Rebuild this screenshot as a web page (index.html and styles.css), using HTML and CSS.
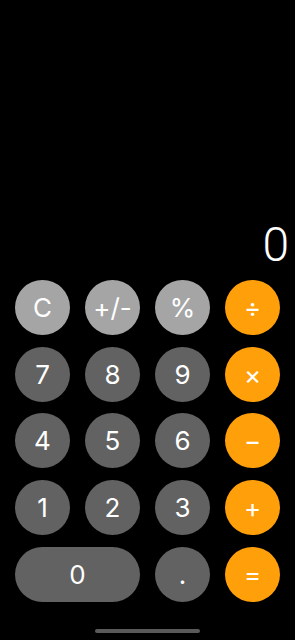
FILE: index.html
```html
<!DOCTYPE html>
<html lang="en">
<head>
<meta charset="utf-8">
<title>Calculator</title>
<link rel="stylesheet" href="styles.css">
</head>
<body>
<main class="calc">
  <div class="display"><span class="value">0</span></div>
  <div class="keypad">
    <button class="key fn">C</button>
    <button class="key fn">+/-</button>
    <button class="key fn">%</button>
    <button class="key op">÷</button>
    <button class="key num">7</button>
    <button class="key num">8</button>
    <button class="key num">9</button>
    <button class="key op">×</button>
    <button class="key num">4</button>
    <button class="key num">5</button>
    <button class="key num">6</button>
    <button class="key op">−</button>
    <button class="key num">1</button>
    <button class="key num">2</button>
    <button class="key num">3</button>
    <button class="key op">+</button>
    <button class="key num zero">0</button>
    <button class="key num">.</button>
    <button class="key op">=</button>
  </div>
  <div class="footer"><span class="home-indicator"></span></div>
</main>
</body>
</html>
```
FILE: styles.css
```css
html, body {
  margin: 0;
  padding: 0;
  background: #000;
}
.calc {
  width: 295px;
  height: 640px;
  display: flex;
  flex-direction: column;
  font-family: Inter, "Liberation Sans", sans-serif;
  color: #fff;
}
.display {
  flex: 1;
  display: flex;
  justify-content: flex-end;
  align-items: flex-end;
  padding: 0 6px 11px 0;
}
.value {
  font-family: Roboto, Inter, sans-serif;
  font-size: 48px;
  font-weight: 300;
  line-height: 1;
}
.keypad {
  display: grid;
  grid-template-columns: repeat(4, 55px);
  grid-auto-rows: 55px;
  column-gap: 15px;
  row-gap: 11.67px;
  padding: 0 15px;
}
.key {
  border: none;
  margin: 0;
  padding: 0;
  border-radius: 27.5px;
  color: #fff;
  font-family: Inter, "Liberation Sans", sans-serif;
  font-size: 26px;
  font-weight: 400;
  display: flex;
  align-items: center;
  justify-content: center;
}
.fn { background: #a5a5a5; }
.num { background: #626262; }
.op { background: #ff9f0a; }
.zero { grid-column: span 2; }
.footer {
  height: 38.33px;
  box-sizing: border-box;
  padding-top: 27.67px;
  display: flex;
  justify-content: center;
}
.home-indicator {
  width: 105px;
  height: 4px;
  border-radius: 2px;
  background: #5a5a5a;
}
```
